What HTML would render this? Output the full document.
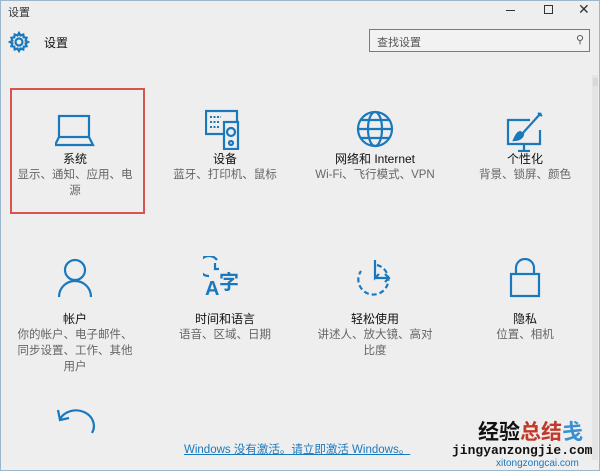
<!DOCTYPE html>
<html><head><meta charset="utf-8"><style>
*{margin:0;padding:0;box-sizing:border-box}
body{width:600px;height:471px;background:#eeeeee;font-family:"Liberation Sans","Noto Sans CJK SC",sans-serif;position:relative;overflow:hidden;color:#222}
.frame{position:absolute;left:0;top:0;width:600px;height:471px;border:1px solid #9cb6cc;}
.t{position:absolute;text-align:center;width:150px;font-size:11.5px;line-height:16px}
.t b{font-weight:normal;color:#111;display:block;font-size:12px}
.t span{color:#666}
svg{position:absolute}
.ic{stroke:#1a78bd;fill:none;stroke-width:2.2}
</style></head><body>
<div class="frame"></div>
<div style="position:absolute;left:8px;top:4px;font-size:11px;color:#333">设置</div>
<div style="position:absolute;left:506px;top:10px;width:9px;height:1px;background:#333"></div>
<div style="position:absolute;left:544px;top:5px;width:9px;height:9px;border:1px solid #333"></div>
<div style="position:absolute;left:578px;top:1px;font-size:14px;color:#333">✕</div>
<svg width="22" height="22" style="left:8px;top:31px" viewBox="0 0 22 22"><circle cx="11" cy="11" r="3.5" class="ic" stroke-width="1.2"/><path d="M11 2l1.5 2.5 2.8-1 .4 2.9 2.9.4-1 2.8L20 11l-2.4 1.4 1 2.8-2.9.4-.4 2.9-2.8-1L11 20l-1.5-2.5-2.8 1-.4-2.9-2.9-.4 1-2.8L2 11l2.4-1.4-1-2.8 2.9-.4.4-2.9 2.8 1z" class="ic" stroke-width="1.1"/></svg>
<div style="position:absolute;left:44px;top:34px;font-size:12px;color:#111">设置</div>
<div style="position:absolute;left:369px;top:29px;width:221px;height:23px;border:1px solid #7a7a7a;background:#f2f2f2;font-size:11px;color:#555;padding:4px 7px">查找设置<span style="position:absolute;right:5px;top:3px;font-size:11px">⚲</span></div>
<div style="position:absolute;left:592px;top:75px;width:6px;height:385px;background:#e4e4e4"></div>
<div style="position:absolute;left:593px;top:78px;width:5px;height:8px;background:#d8d8d8"></div>
<div style="position:absolute;left:10px;top:88px;width:135px;height:126px;border:2px solid #d9534f"></div>
<svg width="40" height="40" style="left:55px;top:112px" viewBox="0 0 40 40"><rect x="4" y="4" width="30" height="21" class="ic"/><path d="M4 25L0 33h38l-4-8" class="ic"/></svg>
<svg width="40" height="42" style="left:205px;top:108px" viewBox="0 0 40 42"><rect x="1" y="3" width="31" height="23" class="ic"/><rect x="19" y="14" width="14" height="27" class="ic" style="fill:#eee"/><circle cx="26" cy="24" r="4" class="ic"/><circle cx="26" cy="35" r="2" class="ic"/><path d="M5 9h11M5 14h9M5 19h9" stroke="#1a78bd" stroke-width="2" stroke-dasharray="2 1.5"/></svg>
<svg width="40" height="40" style="left:355px;top:109px" viewBox="0 0 40 40"><circle cx="20" cy="20" r="17" class="ic"/><ellipse cx="20" cy="20" rx="7" ry="17" class="ic"/><path d="M3 20h34M6 11h28M6 29h28" class="ic"/></svg>
<svg width="40" height="40" style="left:505px;top:112px" viewBox="0 0 40 40"><path d="M25 8H3v24h32V18" class="ic"/><path d="M19 32v7M13 39h12" class="ic"/><path d="M36 1L17 22M33 1l4 3" class="ic"/><path d="M9 28c4 0 9-2 9-6l-3-2c-3 1-4 4-6 8z" class="ic" style="fill:#1a78bd"/></svg>
<div class="t" style="left:0;top:151px"><b>系统</b><span>显示、通知、应用、电<br>源</span></div>
<div class="t" style="left:150px;top:151px"><b>设备</b><span>蓝牙、打印机、鼠标</span></div>
<div class="t" style="left:300px;top:151px"><b>网络和 Internet</b><span>Wi-Fi、飞行模式、VPN</span></div>
<div class="t" style="left:450px;top:151px"><b>个性化</b><span>背景、锁屏、颜色</span></div>
<svg width="40" height="40" style="left:55px;top:258px" viewBox="0 0 40 40"><circle cx="20" cy="12" r="10" class="ic"/><path d="M4 39c0-9 7-16 16-16s16 7 16 16" class="ic"/></svg>
<svg width="40" height="40" style="left:203px;top:256px" viewBox="0 0 40 40"><path d="M14 4a10 10 0 1 0 -8 16" class="ic"/><path d="M12 7v6h4" class="ic"/><text x="2" y="39" font-size="20" font-family="Liberation Sans" fill="#1a78bd" font-weight="bold">A</text><text x="16" y="33" font-size="20" font-family="Noto Sans CJK SC" fill="#1a78bd" font-weight="bold">字</text></svg>
<svg width="40" height="40" style="left:355px;top:258px" viewBox="0 0 40 40"><path d="M22 7a15 15 0 1 1 -16 6" class="ic" stroke-dasharray="5 3"/><path d="M20 2v18l4-4M20 20h13M30 16l4 4-4 4" class="ic"/></svg>
<svg width="40" height="40" style="left:505px;top:258px" viewBox="0 0 40 40"><path d="M11 16V10a9 9 0 0 1 18 0v6" class="ic"/><rect x="6" y="16" width="28" height="22" class="ic"/></svg>
<div class="t" style="left:0;top:311px"><b>帐户</b><span>你的帐户、电子邮件、<br>同步设置、工作、其他<br>用户</span></div>
<div class="t" style="left:150px;top:311px"><b>时间和语言</b><span>语音、区域、日期</span></div>
<div class="t" style="left:300px;top:311px"><b>轻松使用</b><span>讲述人、放大镜、高对<br>比度</span></div>
<div class="t" style="left:450px;top:311px"><b>隐私</b><span>位置、相机</span></div>
<svg width="40" height="30" style="left:56px;top:405px" viewBox="0 0 40 30"><path d="M4 14a16 14 0 0 1 32 14" class="ic"/><path d="M2 5l2 10 9-2" class="ic"/></svg>
<div style="position:absolute;left:184px;top:441px;font-size:11.5px;color:#1a78bd;text-decoration:underline">Windows 没有激活。请立即激活 Windows。</div>
<div style="position:absolute;left:478px;top:420px;font-size:21px;font-weight:bold;font-family:'Noto Sans CJK SC',sans-serif;line-height:22px"><span style="color:#111">经验</span><span style="color:#c0392b">总结</span><span style="color:#3a8fd0">戋</span></div>
<div style="position:absolute;left:452px;top:443px;font-size:13px;font-weight:bold;color:#111;font-family:'Liberation Mono',monospace;white-space:nowrap">jingyanzongjie.com</div>
<div style="position:absolute;left:496px;top:458px;font-size:10px;color:#1a78bd">xitongzongcai.com</div>
</body></html>
